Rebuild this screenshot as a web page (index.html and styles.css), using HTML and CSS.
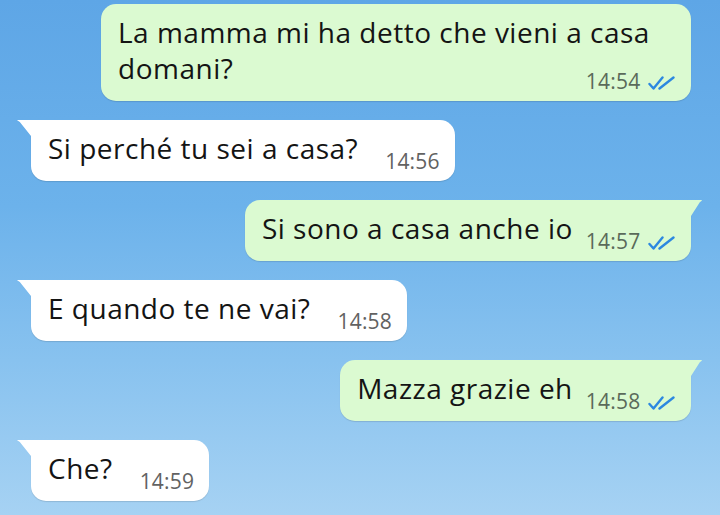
FILE: index.html
```html
<!DOCTYPE html>
<html lang="it">
<head>
    <meta charset="UTF-8">
    <meta name="viewport" content="width=device-width, initial-scale=1.0">
    <title>Chat</title>
    <link rel="stylesheet" href="styles.css">
</head>
<body>

    <div class="chat">
        <!-- messaggio inviato (continuazione, senza coda) -->
        <div class="bubble out first">
            <span class="text">La mamma mi ha detto che vieni a casa domani?</span>
            <span class="meta">14:54 <svg class="ticks" viewBox="0 0 28 14"><path d="M1.5 8 L5.5 12.5 L14.5 1.5 M11.5 12.5 L25.5 1.5"/></svg></span>
        </div>

        <div class="bubble in">
            <span class="text">Si perché tu sei a casa?</span>
            <span class="meta">14:56</span>
        </div>

        <div class="bubble out">
            <span class="text">Si sono a casa anche io</span>
            <span class="meta">14:57 <svg class="ticks" viewBox="0 0 28 14"><path d="M1.5 8 L5.5 12.5 L14.5 1.5 M11.5 12.5 L25.5 1.5"/></svg></span>
        </div>

        <div class="bubble in">
            <span class="text">E quando te ne vai?</span>
            <span class="meta">14:58</span>
        </div>

        <div class="bubble out">
            <span class="text">Mazza grazie eh</span>
            <span class="meta">14:58 <svg class="ticks" viewBox="0 0 28 14"><path d="M1.5 8 L5.5 12.5 L14.5 1.5 M11.5 12.5 L25.5 1.5"/></svg></span>
        </div>

        <div class="bubble in">
            <span class="text">Che?</span>
            <span class="meta">14:59</span>
        </div>
    </div>

</body>
</html>
```

FILE: styles.css
```css
html, body {
    height: 100%;
}

body {
    margin: 0;
    font-family: 'Open Sans', 'Noto Sans', sans-serif;
    color: #141414;
    overflow: hidden;
    /* cielo azzurro dello sfondo */
    background: linear-gradient(180deg, #5ea6e6 0%, #6cb2eb 40%, #88c2ef 70%, #a6d2f3 100%);
}

.chat {
    display: flex;
    flex-direction: column;
    gap: 19px;
    padding: 4px 29px 0 31px;
}

.bubble {
    position: relative;
    max-width: 558px;
    padding: 10px 15px 10px 17px;
    border-radius: 15px;
    font-size: 28px;
    line-height: 36px;
    letter-spacing: 0.5px;
    box-shadow: 0 1px 1px rgba(0, 0, 0, 0.12);
}

.bubble.in {
    align-self: flex-start;
    background-color: #ffffff;
    border-top-left-radius: 0;
}

.bubble.out {
    align-self: flex-end;
    background-color: #dbfad1;
    border-top-right-radius: 0;
}

.bubble.out.first {
    border-top-right-radius: 15px;
}

/* coda della nuvoletta */
.bubble.in::before,
.bubble.out::before {
    content: "";
    position: absolute;
    top: 0;
    width: 14px;
    height: 16px;
}

.bubble.in::before {
    left: -14px;
    background-color: #ffffff;
    clip-path: polygon(0 0, 100% 0, 100% 100%, 20% 12%, 4% 3%);
}

.bubble.out::before {
    right: -11px;
    width: 11px;
    background-color: #dbfad1;
    clip-path: polygon(0 0, 100% 0, 95% 6%, 80% 14%, 0 100%);
}

.bubble.out.first::before {
    display: none;
}

.meta {
    float: right;
    margin: 21px 0 0 27px;
    font-size: 21px;
    line-height: 20px;
    letter-spacing: 0.2px;
    color: #626262;
    white-space: nowrap;
}

.bubble.out .meta {
    margin-left: 13px;
    color: #5a6a5a;
}

.ticks {
    width: 28px;
    height: 14px;
    margin-left: 2px;
    vertical-align: -1px;
    fill: none;
    stroke: #2c88e0;
    stroke-width: 2.4;
    stroke-linecap: round;
    stroke-linejoin: round;
}
```
